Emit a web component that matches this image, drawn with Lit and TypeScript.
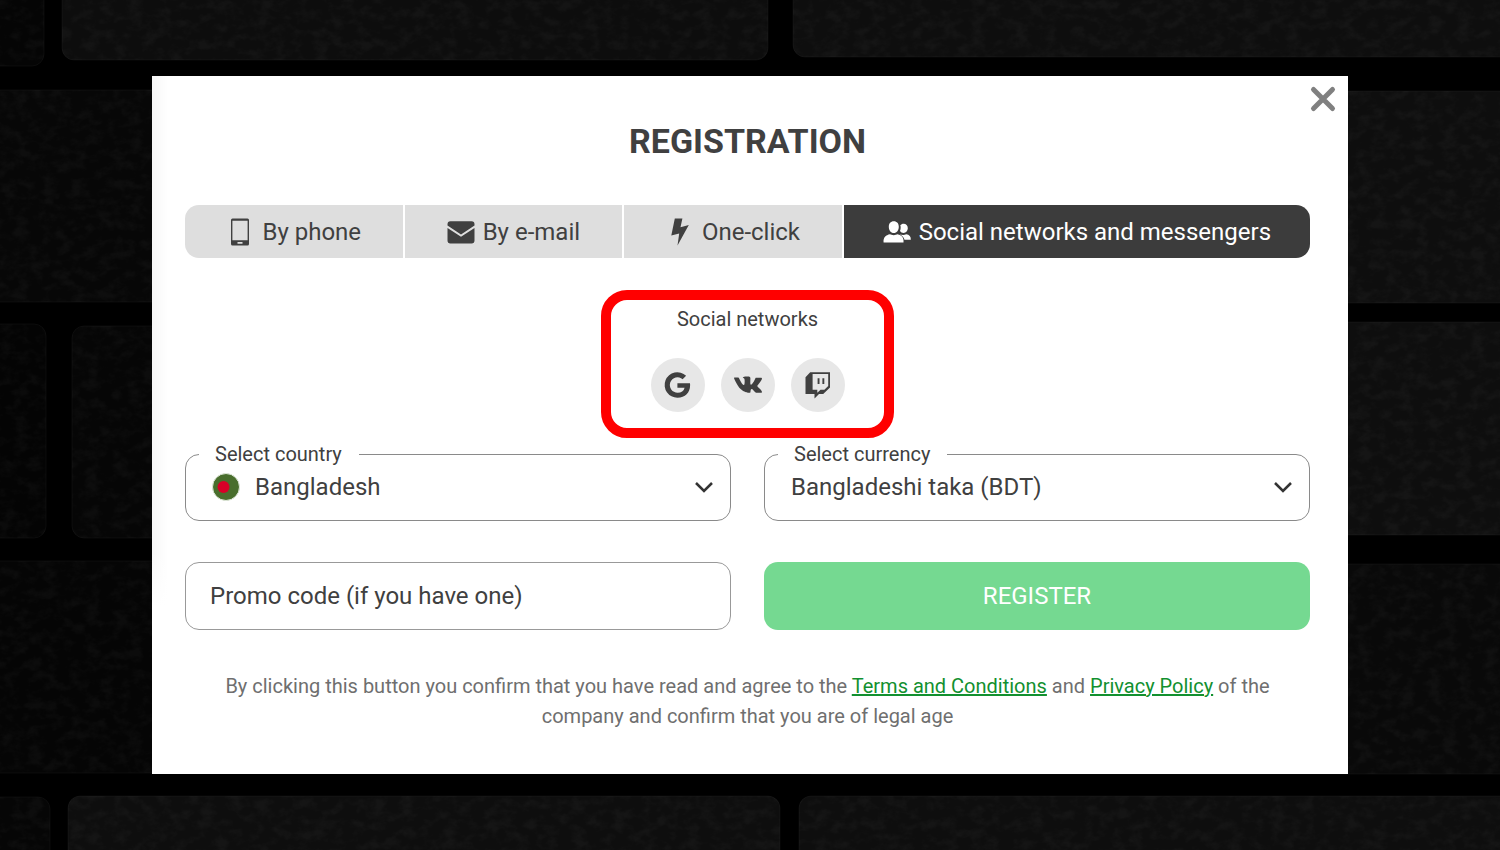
import { LitElement, html, svg, css } from "lit";
import { customElement, state } from "lit/decorators.js";

/** Dark brick wall that fills the page behind the dialog. */
@customElement("brick-wall")
class BrickWall extends LitElement {
  static styles = css`
    :host { display: block; }
    .wall { display: block; width: 100%; height: 100%; }
  `;

  // x, y, width, height, shade
  private bricks: [number, number, number, number, string][] = [
    [-40, -40, 84, 106, "#050505"],
    [62, -40, 706, 100, "#0d0d0d"],
    [793, -40, 760, 97, "#0e0e0e"],
    [-40, 90, 800, 212, "#070707"],
    [800, 91, 740, 212, "#0e0e0e"],
    [-40, 324, 86, 214, "#040404"],
    [72, 326, 700, 212, "#060606"],
    [800, 322, 740, 213, "#0e0e0e"],
    [-40, 561, 800, 212, "#050505"],
    [800, 564, 740, 210, "#090909"],
    [-40, 797, 90, 100, "#060606"],
    [68, 796, 712, 100, "#0e0e0e"],
    [799, 796, 740, 100, "#0e0e0e"],
  ];

  render() {
    return html`
      <svg class="wall" viewBox="0 0 1500 850" preserveAspectRatio="xMidYMid slice" aria-hidden="true">
        <defs>
          <filter id="rough" x="0" y="0" width="100%" height="100%" color-interpolation-filters="sRGB">
            <feTurbulence type="fractalNoise" baseFrequency="0.07 0.1" numOctaves="4" seed="4" />
            <feColorMatrix values="0 0 0 0 1  0 0 0 0 1  0 0 0 0 1  2.4 0 0 0 -0.9" />
          </filter>
          <clipPath id="faces">
            ${this.bricks.map(([x, y, w, h]) => svg`<rect x=${x} y=${y} width=${w} height=${h} rx="12" />`)}
          </clipPath>
        </defs>
        <rect width="1500" height="850" fill="#000" />
        ${this.bricks.map(
          ([x, y, w, h, c]) => svg`<rect x=${x} y=${y} width=${w} height=${h} rx="12" fill=${c} stroke="#fff" stroke-opacity="0.04" />`
        )}
        <g clip-path="url(#faces)">
          <rect width="1500" height="850" filter="url(#rough)" opacity="0.03" />
        </g>
      </svg>
    `;
  }
}

const icons = {
  phone: svg`<path fill-rule="evenodd" d="M6.500.5h15a1.500 1.500 0 0 1 1.500 1.500v24a1.500 1.500 0 0 1-1.500 1.500h-15a1.500 1.500 0 0 1-1.500-1.500V2a1.500 1.500 0 0 1 1.500-1.500zM6.400 2.800v19.400h15.200V2.800zM11.500 24v1.800h5V24z"/>`,
  mail: svg`<path d="M.5 7.6V6.2A2.9 2.9 0 0 1 3.4 3.3h21.2a2.9 2.9 0 0 1 2.900 2.900v1.400L14 16.400zM.5 9.900 14 18.700l13.500-8.800v12.700a2.900 2.900 0 0 1-2.900 2.900H3.400a2.900 2.900 0 0 1-2.900-2.900z"/>`,
  bolt: svg`<path d="M8.800.5h7.600l-1.900 8.700 8.300-2.200L11.500 27.500l1.700-12.100-7.900 2.100z"/>`,
  people: svg`<path d="M10.800 3.300c3.200 0 5 2.400 5 5.400 0 3.400-2 6.300-5 6.300s-5-2.900-5-6.300c0-3 1.800-5.400 5-5.400zM20.600 5.800c2.500 0 4.200 1.900 4.200 4.300 0 2.600-1.700 4.900-4.200 4.900-1.600 0-2.800-.8-3.600-2 .8-2.100.9-3.900.3-5.700.8-.9 1.900-1.500 3.300-1.500zM.6 24.400c-.6-4.800 2.300-7.400 6.400-8.100 1.500 1.100 5.900 1.100 7.500 0 4.200.8 6.600 3.400 6 8.100zM16.500 16.200c2.300.9 5 .9 6.700.1 3.200.4 4.800 2.200 4.600 5.500h-6.300c-.6-2.600-2.400-4.600-5-5.600z"/>`,
  google: svg`<g transform="translate(-1 0)"><path d="M27 12.200H14.400v4.500h7.200c-.8 3.200-3.300 5-7 5a7.700 7.700 0 1 1 5-13.500l3.500-3.400A12.700 12.700 0 1 0 14.500 26.700c7.600 0 12.600-5.200 12.600-12.500 0-.7 0-1.300-.1-2z"/></g>`,
  vk: svg`<g transform="translate(.5 1) scale(.93)"><path d="M14.500 22.400h1.700s.5-.1.800-.4c.2-.3.200-.8.200-.8s0-2.400 1.100-2.800c1.100-.3 2.500 2.400 4 3.400 1.100.8 2 .6 2 .6h3.900s2-.1 1.100-1.800c-.1-.1-.6-1.200-3-3.400-2.500-2.300-2.200-1.900.9-5.900 1.800-2.500 2.600-4 2.300-4.600-.2-.6-1.600-.5-1.600-.5h-4.400s-.4 0-.6.1c-.3.200-.4.500-.4.500s-.7 1.900-1.700 3.500c-2 3.400-2.800 3.600-3.200 3.400-.7-.5-.6-2.100-.6-3.200 0-3.500.6-5-1-5.400-.5-.1-.9-.2-2.300-.2-1.700 0-3.200 0-4 .4-.6.300-1 .9-.7.900.3.100 1 .2 1.400.7.500.7.500 2.200.5 2.200s.3 4.300-.7 4.800c-.6.400-1.600-.4-3.500-3.700-1-1.700-1.800-3.500-1.800-3.500s-.1-.4-.4-.5c-.3-.3-.8-.3-.8-.3H.500s-.7 0-.9.300c-.2.200 0 .7 0 .7s3.300 7.600 7 11.500c3.400 3.500 7.900 4 7.900 4z"/></g>`,
  twitch: svg`<path fill-rule="evenodd" d="M6.200 1.200h19.800v15.300l-6.800 6.500h-4.200l-4.500 4.500V23H1.500V6.200zM8.600 3v15.700h4.700v3.100l3.200-3.100h3.900l3.800-3.600V3z"/><path d="M13.600 7.300h1.900V13h-1.900zM18.400 7.300h1.900V13h-1.900z"/>`,
};

@customElement("app-root")
class AppRoot extends LitElement {
  @state() private active = 3;

  private tabs = [
    { label: "By phone", icon: icons.phone },
    { label: "By e-mail", icon: icons.mail },
    { label: "One-click", icon: icons.bolt },
    { label: "Social networks and messengers", icon: icons.people },
  ];

  private networks = [
    { label: "Google", icon: icons.google },
    { label: "VK", icon: icons.vk },
    { label: "Twitch", icon: icons.twitch },
  ];

  static styles = css`
    :host {
      display: block;
      position: relative;
      min-height: 100vh;
      box-sizing: border-box;
      padding: 76px 152px;
      background: #000;
      color: #404040;
      font: 24px/28px Roboto, sans-serif;
    }
    * { box-sizing: border-box; }
    button, input, select { font: inherit; color: inherit; margin: 0; }
    button { border: 0; cursor: pointer; }
    .backdrop { position: absolute; inset: 0; }
    .dialog {
      position: relative;
      padding: 45px 38px 43px 33px;
      background:
        linear-gradient(180deg, transparent 68%, #fff 76%),
        linear-gradient(90deg, #f7f7f7, #fff 16px);
    }
    .close {
      position: absolute;
      top: 9px;
      right: 11px;
      padding: 0;
      background: none;
      line-height: 0;
    }
    .cross { width: 28px; height: 28px; stroke: #808080; stroke-width: 5; stroke-linecap: round; }
    .title { margin: 0 0 44px; font-size: 34px; line-height: 40px; font-weight: 700; text-align: center; }
    .tabs {
      display: grid;
      grid-template-columns: 7fr 7fr 7fr 15fr;
      gap: 2px;
      margin-bottom: 32px;
      border-radius: 14px;
      overflow: hidden;
    }
    .tab {
      display: flex;
      align-items: center;
      justify-content: center;
      gap: 8px;
      height: 53px;
      padding: 0;
      background: #dedede;
      white-space: nowrap;
    }
    .tab.on { background: #3c3c3c; color: #fff; }
    .icon { width: 28px; height: 28px; fill: currentColor; flex: none; overflow: visible; }
    .social {
      width: 293px;
      margin: 0 auto 4px;
      padding: 7px 0 16px;
      border: 10px solid #f00;
      border-radius: 26px;
      text-align: center;
    }
    .caption { margin: 0 0 27px; font-size: 20px; line-height: 24px; font-weight: 400; }
    .networks { display: flex; justify-content: center; gap: 16px; }
    .network {
      display: grid;
      place-items: center;
      width: 54px;
      height: 54px;
      padding: 0;
      border-radius: 50%;
      background: #e7e7e7;
    }
    .form { display: grid; grid-template-columns: 1fr 1fr; gap: 41px 33px; }
    .field {
      min-width: 0;
      height: 79px;
      margin: 0;
      padding: 0;
      border: 1px solid #8a8a8a;
      border-radius: 14px;
    }
    .legend { margin-left: 13px; padding: 0 17px 0 16px; font-size: 20px; line-height: 24px; }
    .control { display: grid; align-items: center; height: 42px; }
    .control > * { grid-area: 1 / 1; }
    .select {
      width: 100%;
      height: 42px;
      padding: 0 60px 0 26px;
      border: 0;
      background: none;
      appearance: none;
    }
    .select.flagged { padding-left: 69px; }
    .flag { width: 28px; height: 28px; margin-left: 26px; pointer-events: none; }
    .chevron {
      justify-self: end;
      width: 20px;
      height: 20px;
      margin-right: 16px;
      fill: none;
      stroke: #333;
      stroke-width: 2.5;
      pointer-events: none;
    }
    .promo, .register { width: 100%; height: 68px; border-radius: 14px; }
    .promo { padding: 0 24px; border: 1px solid #999; background: none; }
    .promo::placeholder { color: #404040; opacity: 1; }
    .register { background: #75d991; color: #fff; }
    .legal { margin: 41px 24px 0; font-size: 20px; line-height: 30px; text-align: center; color: #6f6f6f; }
    .link { color: #12902f; }
  `;

  private chevron() {
    return html`<svg class="chevron" viewBox="0 0 20 20" aria-hidden="true"><path d="M2 6l8 8 8-8" /></svg>`;
  }

  render() {
    return html`
      <brick-wall class="backdrop"></brick-wall>
      <main class="dialog">
        <button class="close" type="button" aria-label="Close">
          <svg class="cross" viewBox="0 0 28 28"><path d="M4.500 4.500l19 19M23.500 4.500l-19 19" /></svg>
        </button>
        <h1 class="title">REGISTRATION</h1>
        <div class="tabs" role="tablist">
          ${this.tabs.map(
            (t, i) => html`
              <button
                class="tab ${i === this.active ? "on" : ""}"
                type="button"
                role="tab"
                aria-selected=${i === this.active}
                @click=${() => (this.active = i)}
              ><svg class="icon" viewBox="0 0 28 28" aria-hidden="true">${t.icon}</svg><span>${t.label}</span></button>
            `
          )}
        </div>
        <section class="social">
          <h2 class="caption">Social networks</h2>
          <div class="networks">
            ${this.networks.map(
              (n) => html`
                <button class="network" type="button" aria-label=${n.label}>
                  <svg class="icon" viewBox="0 0 28 28" aria-hidden="true">${n.icon}</svg>
                </button>
              `
            )}
          </div>
        </section>
        <form class="form" @submit=${(e: Event) => e.preventDefault()}>
          <fieldset class="field">
            <legend class="legend"><label for="country">Select country</label></legend>
            <div class="control">
              <select class="select flagged" id="country"><option>Bangladesh</option></select>
              <svg class="flag" viewBox="0 0 28 28" aria-hidden="true">
                <circle cx="14" cy="14" r="13.500" fill="#496e2d" stroke="#dfe8da" />
                <circle cx="11.500" cy="14" r="6" fill="#d80027" />
              </svg>
              ${this.chevron()}
            </div>
          </fieldset>
          <fieldset class="field">
            <legend class="legend"><label for="currency">Select currency</label></legend>
            <div class="control">
              <select class="select" id="currency"><option>Bangladeshi taka (BDT)</option></select>
              ${this.chevron()}
            </div>
          </fieldset>
          <input class="promo" type="text" aria-label="Promo code" placeholder="Promo code (if you have one)" />
          <button class="register" type="submit">REGISTER</button>
        </form>
        <p class="legal">
          By clicking this button you confirm that you have read and agree to the
          <a class="link" href="#terms">Terms and Conditions</a> and
          <a class="link" href="#privacy">Privacy Policy</a> of the company and confirm that you are of legal age
        </p>
      </main>
    `;
  }
}
